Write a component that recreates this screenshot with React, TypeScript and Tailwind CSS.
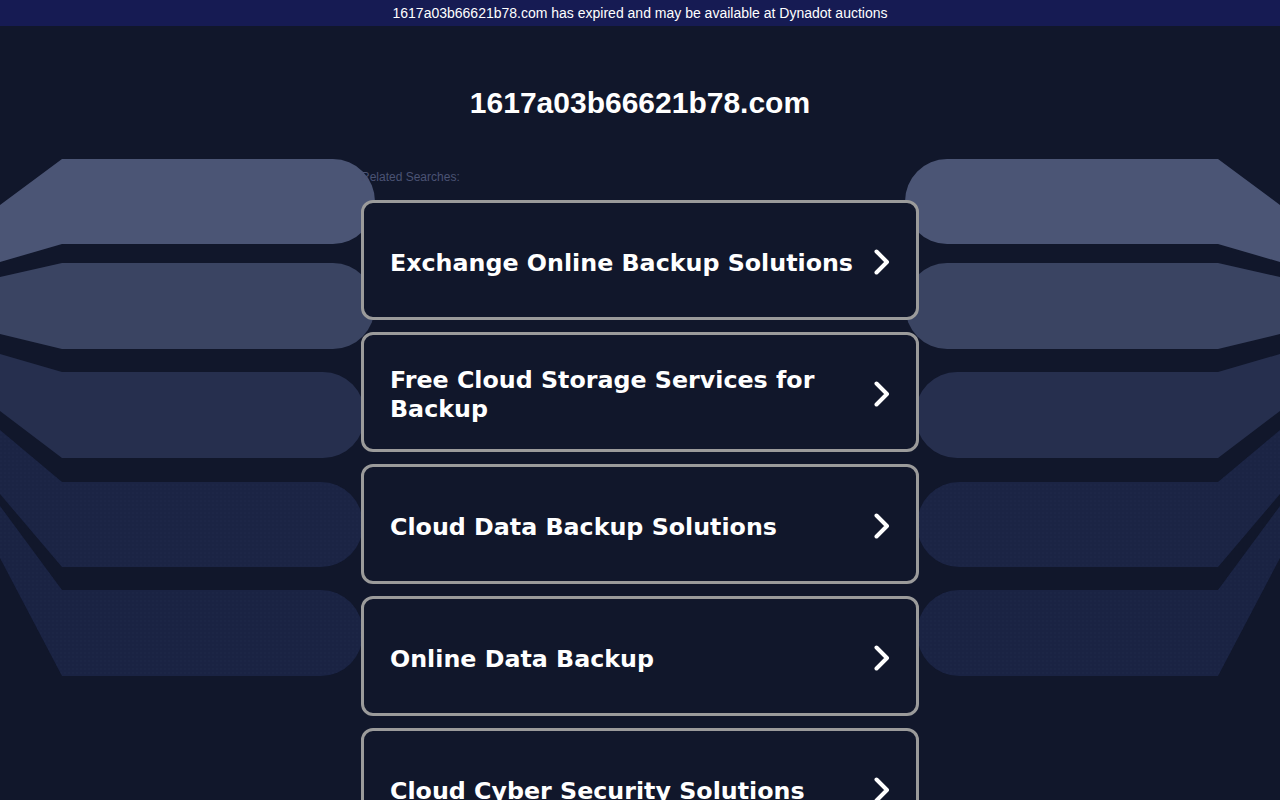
import React from 'react';

const searches = [
  'Exchange Online Backup Solutions',
  'Free Cloud Storage Services for Backup',
  'Cloud Data Backup Solutions',
  'Online Data Backup',
  'Cloud Cyber Security Solutions',
];

// decorative stacked bands on the page sides
const bands = [
  { d: 'M0,205 L62,159 H333 A42,42.5 0 0 1 333,244 H62 L0,262 Z', fill: '#4b5575', dots: false },
  { d: 'M0,277 L62,263 H333 A42,43 0 0 1 333,349 H62 L0,334 Z', fill: '#3a4462', dots: false },
  { d: 'M0,354 L62,372 H323 A42,43 0 0 1 323,458 H62 L0,411 Z', fill: '#262f4e', dots: false },
  { d: 'M0,430 L62,482 H321 A42,42.5 0 0 1 321,567 H62 L0,494 Z', fill: '#1b2444', dots: true },
  { d: 'M0,506 L62,590 H321 A42,43 0 0 1 321,676 H62 L0,558 Z', fill: '#1a2343', dots: true },
];

const SideBands = ({ id, flip }: { id: string; flip?: boolean }) => (
  <svg
    className={`absolute top-0 pointer-events-none ${flip ? 'right-0 -scale-x-100' : 'left-0'}`}
    width="400"
    height="800"
    viewBox="0 0 400 800"
  >
    <defs>
      <pattern id={id} width="4" height="4" patternUnits="userSpaceOnUse">
        <circle cx="1" cy="1" r="0.5" fill="#232d50" />
      </pattern>
    </defs>
    {bands.map((b, i) => (
      <g key={i}>
        <path d={b.d} fill={b.fill} />
        {b.dots && <path d={b.d} fill={`url(#${id})`} />}
      </g>
    ))}
  </svg>
);

const Chevron = () => (
  <svg width="16" height="26" viewBox="0 0 16 26" className="shrink-0">
    <polyline
      points="2.5,2.5 13,13 2.5,23.5"
      fill="none"
      stroke="#ffffff"
      strokeWidth="4"
      strokeLinecap="round"
      strokeLinejoin="round"
    />
  </svg>
);

export default function App() {
  return (
    <div className="relative min-h-screen overflow-hidden bg-[#11172b] font-['Liberation_Sans',Arial,sans-serif]">
      <div className="relative z-10 h-[26px] bg-[#161b53] text-center text-[14px] leading-[26px] text-white">
        1617a03b66621b78.com has expired and may be available at Dynadot auctions
      </div>

      <SideBands id="dots-left" />
      <SideBands id="dots-right" flip />

      <div className="relative z-10 mx-auto w-[558px]">
        <h1 className="mt-[59px] text-center text-[30px] font-bold leading-[36px] text-white">
          1617a03b66621b78.com
        </h1>
        <div className="mt-[49px] text-[12px] leading-[14px] text-[#4b5374]">Related Searches:</div>

        <div className="mt-[16px] flex flex-col gap-[12px]">
          {searches.map((s) => (
            <a
              key={s}
              href="#"
              className="flex h-[120px] items-center gap-[12px] rounded-[12px] border-[3px] border-[#9b9b9b] bg-[#11172b] pl-[26px] pr-[26px] pt-[4px]"
            >
              <span className="flex-1 pt-[2px] font-['DejaVu_Sans',Verdana,sans-serif] text-[23.75px] font-bold leading-[29px] text-white">
                {s}
              </span>
              <Chevron />
            </a>
          ))}
        </div>
      </div>
    </div>
  );
}
